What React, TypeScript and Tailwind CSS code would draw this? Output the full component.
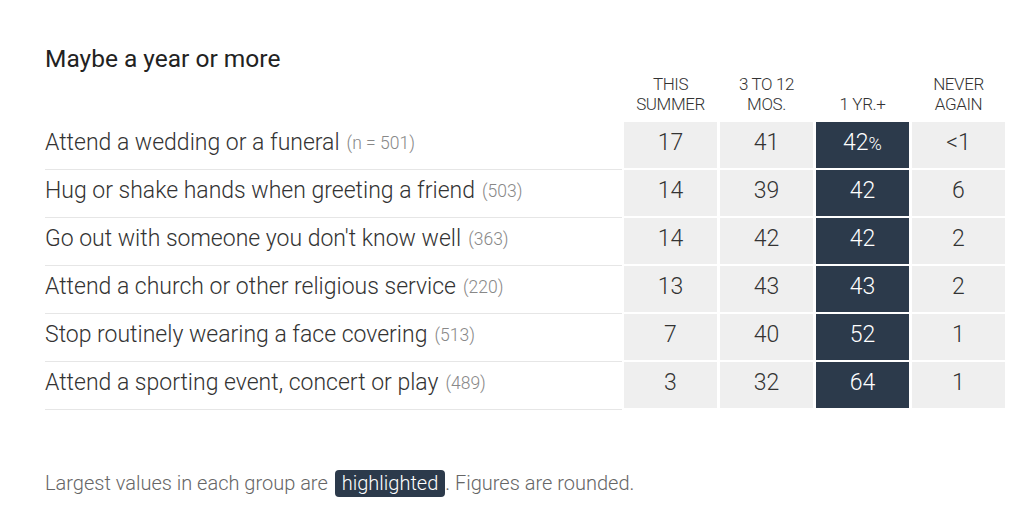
const rows = [
  { label: "Attend a wedding or a funeral", n: "(n = 501)", v: ["17", "41", "42", "<1"] },
  { label: "Hug or shake hands when greeting a friend", n: "(503)", v: ["14", "39", "42", "6"] },
  { label: "Go out with someone you don't know well", n: "(363)", v: ["14", "42", "42", "2"] },
  { label: "Attend a church or other religious service", n: "(220)", v: ["13", "43", "43", "2"] },
  { label: "Stop routinely wearing a face covering", n: "(513)", v: ["7", "40", "52", "1"] },
  { label: "Attend a sporting event, concert or play", n: "(489)", v: ["3", "32", "64", "1"] },
];

const headers = [["THIS", "SUMMER"], ["3 TO 12", "MOS."], ["", "1 YR.+"], ["NEVER", "AGAIN"]];

export default function App() {
  return (
    <div className="w-[1034px] h-[522px] bg-white pl-[45px] pr-[29px] pt-[44px] text-[#333] font-['Roboto',sans-serif] font-light">
      <h2 className="h-[30px] text-[24.5px] leading-[30px] text-[#222] font-normal">Maybe a year or more</h2>
      <div className="flex justify-end">
        <div className="grid grid-cols-4 gap-[3px] w-[381px]">
          {headers.map((h, i) => (
            <div key={i} className="text-center text-[17px] leading-[20px] tracking-[-0.4px] text-[#333]">
              <div>{h[0] || "\u00a0"}</div>
              <div>{h[1]}</div>
            </div>
          ))}
        </div>
      </div>

      <div className="flex flex-col gap-[2px] mt-[8px]">
        {rows.map((r, i) => (
          <div key={i} className="flex h-[46px] relative">
            <div className="flex-1 flex items-center text-[23px] pr-2 pb-[4px]">
              <span>{r.label}</span>
              <span className="ml-[7px] text-[17.5px] text-[#888]">{r.n}</span>
            </div>
            <div className="absolute left-0 right-[383px] -bottom-[2px] h-px bg-[#e6e6e6]" />
            <div className="grid grid-cols-4 gap-[3px] w-[381px]">
              {r.v.map((v, j) => (
                <div
                  key={j}
                  className={
                    j === 2
                      ? "bg-[#2c3a4b] text-white flex items-center justify-center text-[23px] pb-[3px]"
                      : "bg-[#efefef] flex items-center justify-center text-[23px] pb-[3px]"
                  }
                >
                  {v}
                  {i === 0 && j === 2 && <span className="text-[18px]">%</span>}
                </div>
              ))}
            </div>
          </div>
        ))}
      </div>

      <p className="mt-[61px] text-[20px] leading-[28px] text-[#666] flex items-center">
        Largest values in each group are
        <span className="ml-[7px] bg-[#2c3a4b] text-white rounded-[4px] px-[7px] leading-[27px]">highlighted</span>
        . Figures are rounded.
      </p>
    </div>
  );
}
